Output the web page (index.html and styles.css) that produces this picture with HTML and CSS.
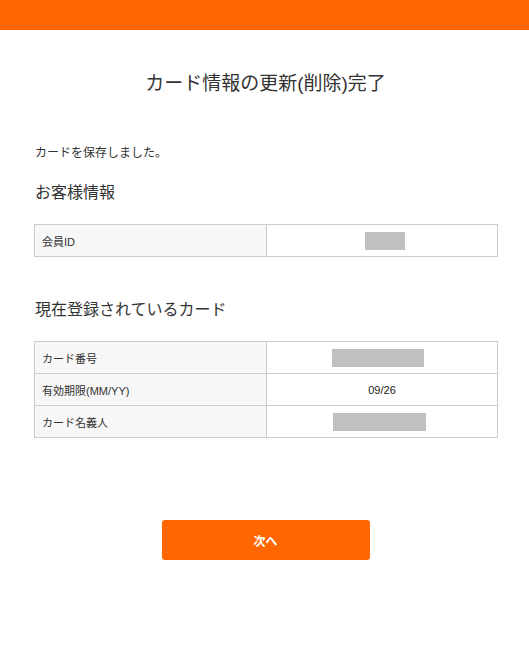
FILE: index.html
```html
<!DOCTYPE html>
<html lang="ja">
<head>
<meta charset="utf-8">
<title>カード情報の更新(削除)完了</title>
<link rel="stylesheet" href="styles.css">
</head>
<body>
<header class="topbar"></header>
<main class="page">
  <h1 class="title">カード情報の更新(削除)完了</h1>
  <p class="message">カードを保存しました。</p>
  <h2 class="section-title">お客様情報</h2>
  <table class="info">
    <tr>
      <th>会員ID</th>
      <td><span class="mask mask-id"></span></td>
    </tr>
  </table>
  <h2 class="section-title second">現在登録されているカード</h2>
  <table class="info">
    <tr>
      <th>カード番号</th>
      <td><span class="mask mask-number"></span></td>
    </tr>
    <tr>
      <th>有効期限(MM/YY)</th>
      <td>09/26</td>
    </tr>
    <tr>
      <th>カード名義人</th>
      <td><span class="mask mask-name"></span></td>
    </tr>
  </table>
  <div class="actions">
    <button class="next-btn" type="button">次へ</button>
  </div>
</main>
</body>
</html>
```

FILE: styles.css
```css
html, body {
  margin: 0;
  padding: 0;
  background: #ffffff;
}

body {
  font-family: "Liberation Sans", Arial, "Noto Sans CJK JP", sans-serif;
  color: #333333;
}

.topbar {
  height: 30px;
  background: #ff6600;
}

.page {
  width: 463px;
  margin: 0 0 0 34px;
  display: flex;
  flex-direction: column;
}

.title {
  margin: 41px 0 0;
  font-size: 19px;
  line-height: 26px;
  font-weight: normal;
  text-align: center;
  color: #333333;
}

.message {
  margin: 47px 0 0 1px;
  font-size: 12px;
  line-height: 18px;
}

.section-title {
  margin: 19px 0 0 1px;
  font-size: 16px;
  line-height: 24px;
  font-weight: normal;
}

.section-title.second {
  margin-top: 41px;
}

.info {
  margin-top: 19px;
  width: 464px;
  border-collapse: collapse;
  table-layout: fixed;
  font-size: 11px;
}

.info th,
.info td {
  border: 1px solid #cccccc;
  height: 32px;
  padding: 0 7px;
  box-sizing: border-box;
  vertical-align: middle;
}

.info th {
  width: 232px;
  background: #f7f7f7;
  text-align: left;
  font-weight: normal;
  color: #333333;
}

.info td {
  background: #ffffff;
  text-align: center;
  color: #222222;
}

.mask {
  display: inline-block;
  height: 18px;
  background: #c0c0c0;
  vertical-align: middle;
}

.mask-id {
  width: 40px;
  margin-left: 5px;
}

.mask-number {
  width: 92px;
  margin-left: -9px;
}

.mask-name {
  width: 93px;
  margin-left: -6px;
}

.actions {
  display: flex;
  justify-content: center;
  margin-top: 82px;
}

.next-btn {
  width: 208px;
  height: 40px;
  border: none;
  border-radius: 3px;
  background: #ff6600;
  color: #ffffff;
  font-family: "Liberation Sans", Arial, "Noto Sans CJK JP", sans-serif;
  font-size: 12px;
  font-weight: bold;
  cursor: pointer;
}
```
